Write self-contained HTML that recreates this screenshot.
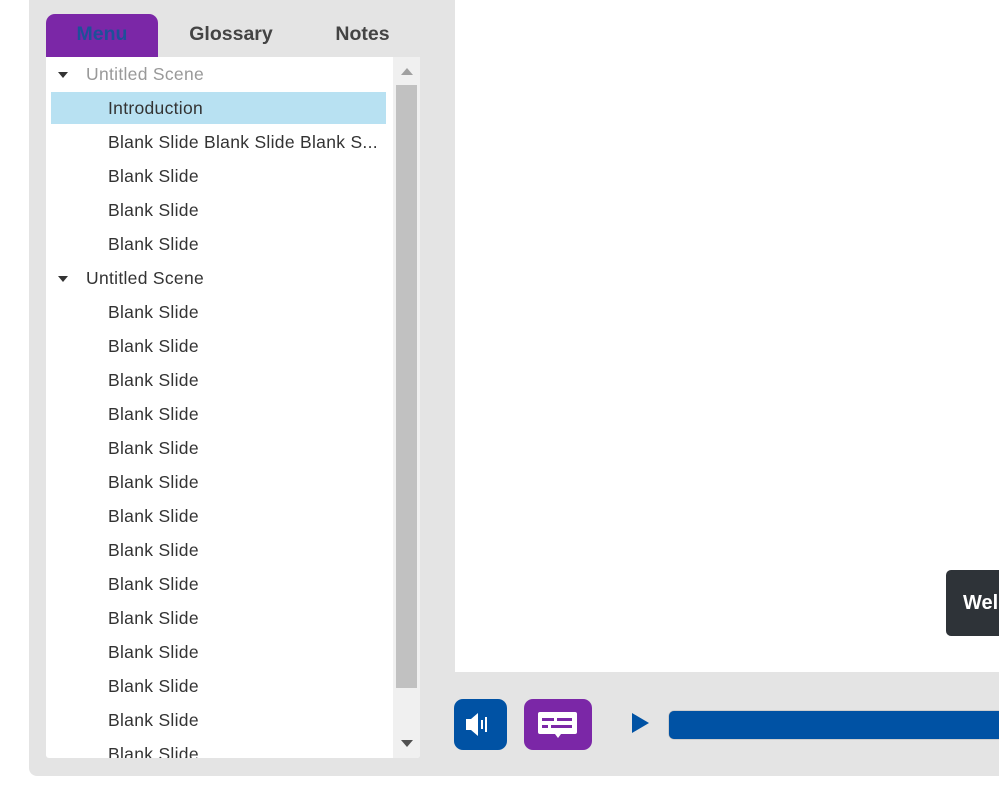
<!DOCTYPE html>
<html><head><style>
*{margin:0;padding:0;box-sizing:border-box}
body{width:999px;height:800px;background:#fff;position:relative;overflow:hidden;font-family:"Liberation Sans",Arial,sans-serif}
.frame{position:absolute;left:29px;top:0;width:980px;height:776px;background:#e4e4e4;border-bottom-left-radius:8px}
.stage{position:absolute;left:455px;top:0;width:560px;height:672px;background:#fff}
.tab{position:absolute;top:14px;height:43px;font-size:19.5px;font-weight:bold;line-height:40px;text-align:center;color:#444}
.list{position:absolute;left:46px;top:57px;width:374px;height:701px;background:#fff;overflow:hidden;border-radius:0 0 3px 3px}
.track{position:absolute;left:347px;top:0;width:27px;height:701px;background:#f0f0f0}
.thumb{position:absolute;left:350px;top:28px;width:21px;height:603px;background:#c1c1c1}
.row{position:absolute;left:5px;width:335px;height:32px;font-size:17.5px;letter-spacing:0.3px;line-height:32px;color:#333;padding-left:57px;white-space:nowrap}
.scene{padding-left:35px}
.scene:before{content:"";position:absolute;left:7px;top:14px;border-left:5px solid transparent;border-right:5px solid transparent;border-top:6px solid #333}
</style></head><body>
<div class="frame"></div>
<div class="stage"></div>
<div class="tab" style="left:46px;width:112px;background:#7b27a7;border-radius:9px 9px 0 0;color:#1e4f9a;">Menu</div>
<div class="tab" style="left:172px;width:118px;">Glossary</div>
<div class="tab" style="left:320px;width:85px;">Notes</div>
<div class="list">
<div class="track"></div><div class="thumb"></div>
<div style="position:absolute;left:355px;top:11px;border-left:6px solid transparent;border-right:6px solid transparent;border-bottom:7px solid #a0a0a0"></div>
<div style="position:absolute;left:355px;top:683px;border-left:6px solid transparent;border-right:6px solid transparent;border-top:7px solid #505050"></div>
<div class="row scene" style="top:1px;color:#999">Untitled Scene</div>
<div class="row" style="top:35px;background:#b8e1f2">Introduction</div>
<div class="row" style="top:69px">Blank Slide Blank Slide Blank S...</div>
<div class="row" style="top:103px">Blank Slide</div>
<div class="row" style="top:137px">Blank Slide</div>
<div class="row" style="top:171px">Blank Slide</div>
<div class="row scene" style="top:205px">Untitled Scene</div>
<div class="row" style="top:239px">Blank Slide</div>
<div class="row" style="top:273px">Blank Slide</div>
<div class="row" style="top:307px">Blank Slide</div>
<div class="row" style="top:341px">Blank Slide</div>
<div class="row" style="top:375px">Blank Slide</div>
<div class="row" style="top:409px">Blank Slide</div>
<div class="row" style="top:443px">Blank Slide</div>
<div class="row" style="top:477px">Blank Slide</div>
<div class="row" style="top:511px">Blank Slide</div>
<div class="row" style="top:545px">Blank Slide</div>
<div class="row" style="top:579px">Blank Slide</div>
<div class="row" style="top:613px">Blank Slide</div>
<div class="row" style="top:647px">Blank Slide</div>
<div class="row" style="top:681px">Blank Slide</div>
</div>
<div style="position:absolute;left:946px;top:570px;width:70px;height:66px;background:#2e3338;border-radius:5px;color:#fff;font-weight:bold;font-size:20px;line-height:66px;padding-left:17px">Wel</div>
<div style="position:absolute;left:454px;top:699px;width:53px;height:51px;background:#0052a4;border-radius:9px">
<svg width="53" height="51" viewBox="0 0 53 51"><path d="M12 20h5l7-6v23l-7-6h-5z" fill="#fff"/><rect x="27" y="21" width="2" height="9" fill="#fff"/><rect x="31" y="18" width="2" height="15" fill="#fff"/></svg></div>
<div style="position:absolute;left:524px;top:699px;width:68px;height:51px;background:#7b27a7;border-radius:9px">
<svg width="68" height="51" viewBox="0 0 68 51"><path d="M16 13h35a2 2 0 0 1 2 2v18a2 2 0 0 1-2 2H37l-3 4-3-4H16a2 2 0 0 1-2-2V15a2 2 0 0 1 2-2z" fill="#fff"/><rect x="18" y="19" width="12" height="3" fill="#7b27a7"/><rect x="33" y="19" width="15" height="3" fill="#7b27a7"/><rect x="18" y="26" width="6" height="3" fill="#7b27a7"/><rect x="27" y="26" width="21" height="3" fill="#7b27a7"/></svg></div>
<div style="position:absolute;left:632px;top:713px;border-top:10px solid transparent;border-bottom:10px solid transparent;border-left:17px solid #0052a4"></div>
<div style="position:absolute;left:669px;top:711px;width:340px;height:28px;background:#0052a4;border-radius:5px;box-shadow:0 0 1px #555"></div>
</body></html>
